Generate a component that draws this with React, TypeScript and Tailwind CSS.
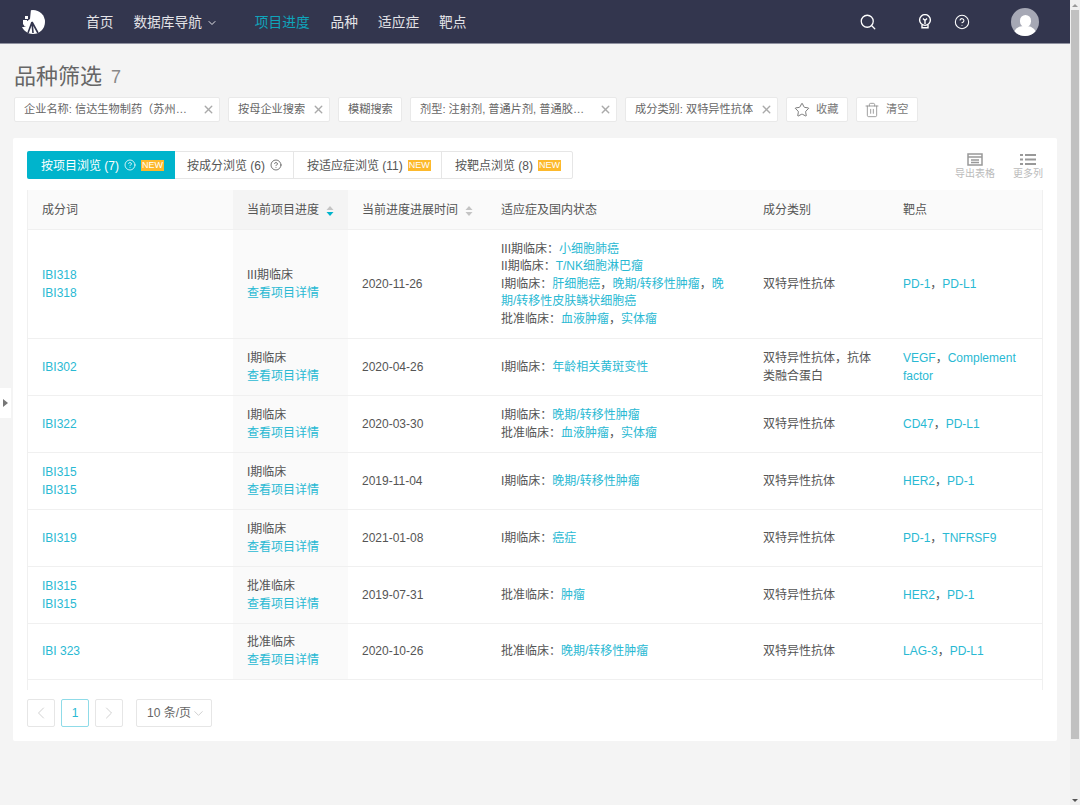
import { ChevronDown, ChevronLeft, ChevronRight, CircleHelp, Search, Star, Trash2, X } from 'lucide-react'

const chips = [
  { text: '企业名称: 信达生物制药（苏州…', w: 'w-[206px]' },
  { text: '按母企业搜索', w: 'w-[102px]' },
  { text: '模糊搜索', w: 'w-[64px]', plain: true },
  { text: '剂型: 注射剂, 普通片剂, 普通胶…', w: 'w-[207px]' },
  { text: '成分类别: 双特异性抗体', w: 'w-[153px]' },
]

const tabs = [
  { text: '按项目浏览 (7)', w: 'w-[148px]', help: true, isNew: true, active: true },
  { text: '按成分浏览 (6)', w: 'w-[119px]', help: true },
  { text: '按适应症浏览 (11)', w: 'w-[148px]', isNew: true },
  { text: '按靶点浏览 (8)', w: 'w-[131px]', isNew: true },
]

type Status = { label: string; links: string[] }

const rows: {
  names: string[]
  stage: string
  date: string
  status: Status[]
  kind: string
  targets: string[]
  h: string
}[] = [
  {
    names: ['IBI318', 'IBI318'],
    stage: 'III期临床',
    date: '2020-11-26',
    status: [
      { label: 'III期临床：', links: ['小细胞肺癌'] },
      { label: 'II期临床：', links: ['T/NK细胞淋巴瘤'] },
      { label: 'I期临床：', links: ['肝细胞癌', '晚期/转移性肿瘤', '晚期/转移性皮肤鳞状细胞癌'] },
      { label: '批准临床：', links: ['血液肿瘤', '实体瘤'] },
    ],
    kind: '双特异性抗体',
    targets: ['PD-1', 'PD-L1'],
    h: 'h-[109px]',
  },
  {
    names: ['IBI302'],
    stage: 'I期临床',
    date: '2020-04-26',
    status: [{ label: 'I期临床：', links: ['年龄相关黄斑变性'] }],
    kind: '双特异性抗体，抗体类融合蛋白',
    targets: ['VEGF', 'Complement factor'],
    h: 'h-[57px]',
  },
  {
    names: ['IBI322'],
    stage: 'I期临床',
    date: '2020-03-30',
    status: [
      { label: 'I期临床：', links: ['晚期/转移性肿瘤'] },
      { label: '批准临床：', links: ['血液肿瘤', '实体瘤'] },
    ],
    kind: '双特异性抗体',
    targets: ['CD47', 'PD-L1'],
    h: 'h-[57px]',
  },
  {
    names: ['IBI315', 'IBI315'],
    stage: 'I期临床',
    date: '2019-11-04',
    status: [{ label: 'I期临床：', links: ['晚期/转移性肿瘤'] }],
    kind: '双特异性抗体',
    targets: ['HER2', 'PD-1'],
    h: 'h-[57px]',
  },
  {
    names: ['IBI319'],
    stage: 'I期临床',
    date: '2021-01-08',
    status: [{ label: 'I期临床：', links: ['癌症'] }],
    kind: '双特异性抗体',
    targets: ['PD-1', 'TNFRSF9'],
    h: 'h-[57px]',
  },
  {
    names: ['IBI315', 'IBI315'],
    stage: '批准临床',
    date: '2019-07-31',
    status: [{ label: '批准临床：', links: ['肿瘤'] }],
    kind: '双特异性抗体',
    targets: ['HER2', 'PD-1'],
    h: 'h-[57px]',
  },
  {
    names: ['IBI 323'],
    stage: '批准临床',
    date: '2020-10-26',
    status: [{ label: '批准临床：', links: ['晚期/转移性肿瘤'] }],
    kind: '双特异性抗体',
    targets: ['LAG-3', 'PD-L1'],
    h: 'h-[56px]',
  },
]

function Logo() {
  return (
    <svg width="26" height="26" viewBox="0 0 26 26" className="shrink-0">
      <circle cx="13" cy="13" r="12" fill="#fff" />
      <path d="M0 0H11L10 10L6 13L6 18L0 18Z" fill="#33364e" />
      <rect x="5" y="7" width="3" height="3" fill="#fff" />
      <rect x="3" y="11" width="4" height="4" fill="#fff" />
      <path d="M3 15L10 12L11 15L5 18Z" fill="#fff" />
      <path d="M12 13L8 24M12 13L13 24M12 13L18 24" stroke="#33364e" strokeWidth="1.6" fill="none" />
    </svg>
  )
}

function BulbIcon() {
  return (
    <svg width="14" height="15" viewBox="0 0 14 15" fill="none" stroke="#fff" strokeWidth="1.4">
      <circle cx="7" cy="6" r="5.4" />
      <path d="M7 10V6.5L5 4.6M7 6.5L9 4.6" />
      <path d="M4 11V13.8H10V11" />
    </svg>
  )
}

function SortCaret({ active }: { active?: boolean }) {
  return (
    <svg width="8" height="12" viewBox="0 0 8 12" className="ml-[7px] shrink-0">
      <path d="M4 1L7.5 5H0.5Z" fill="#c4c4c4" />
      <path d="M4 11L7.5 7H0.5Z" fill={active ? '#00b4cc' : '#c4c4c4'} />
    </svg>
  )
}

function NewBadge() {
  return (
    <span className="ml-[5px] flex h-[11px] w-[23px] items-center justify-center bg-[#fdb92c] text-[9px] leading-none text-white">
      NEW
    </span>
  )
}

function Chip({ text, w, plain }: { text: string; w: string; plain?: boolean }) {
  return (
    <div className={`flex h-[25px] shrink-0 items-center justify-between rounded-[2px] border border-[#e9e9e9] bg-white pl-[9px] pr-[4px] ${w}`}>
      <span className="truncate pt-[1px] text-[11.2px] text-[#666]">{text}</span>
      {!plain && <X size={13} strokeWidth={2.6} className="shrink-0 text-[#aaa]" />}
    </div>
  )
}

function LinkList({ items }: { items: string[] }) {
  return (
    <>
      {items.map((item, i) => (
        <span key={item}>
          {i > 0 && <span className="text-[#555]">，</span>}
          <span className="text-[#29b9d3]">{item}</span>
        </span>
      ))}
    </>
  )
}

export default function App() {
  return (
    <div className="flex h-[805px] w-[1080px] overflow-hidden bg-[#f4f4f4] font-['Liberation_Sans','Noto_Sans_CJK_SC',sans-serif] text-[12px] leading-[17.6px] text-[#555]">
      <div className="relative w-[1070px] shrink-0">
        {/* top nav */}
        <header className="flex h-[44px] items-center border-b border-[#8f91a0] bg-[#33364e] text-[#e4e4e8]">
          <div className="ml-[20px] flex w-[66px] items-center">
            <Logo />
          </div>
          <nav className="flex items-center pt-[2px] text-[13.7px]">
            <a>首页</a>
            <a className="ml-[20px]">数据库导航</a>
            <ChevronDown size={12} strokeWidth={2} className="ml-[4px]" />
            <a className="ml-[37px] text-[#0fa5bb]">项目进度</a>
            <a className="ml-[21px]">品种</a>
            <a className="ml-[20px]">适应症</a>
            <a className="ml-[20px]">靶点</a>
          </nav>
          <div className="ml-auto flex items-center text-white">
            <Search size={18} strokeWidth={1.7} />
            <div className="ml-[41px]">
              <BulbIcon />
            </div>
            <CircleHelp size={16} strokeWidth={1.6} className="ml-[22px]" />
            <div className="relative ml-[41px] mr-[31px] h-[28px] w-[28px] overflow-hidden rounded-full bg-[#a6a8b5]">
              <div className="mx-auto mt-[7px] h-[12px] w-[11px] rounded-full bg-white" />
              <div className="mx-auto -mt-[1px] h-[12px] w-[24px] rounded-t-[10px] bg-white" />
            </div>
          </div>
        </header>

        <div className="flex items-center pl-[14px] pt-[18px]">
          <span className="text-[22px] leading-[30px] text-[#666]">品种筛选</span>
          <span className="ml-[9px] text-[18px] leading-[30px] text-[#888]">7</span>
        </div>

        {/* active filters */}
        <div className="mt-[5px] flex gap-[8px] pl-[14px]">
          {chips.map(c => (
            <Chip key={c.text} {...c} />
          ))}
          <div className="flex h-[25px] w-[62px] items-center gap-[6px] rounded-[2px] border border-[#e9e9e9] bg-white pl-[7px] text-[11.2px] text-[#777]">
            <Star size={16} strokeWidth={1.3} className="text-[#666]" />
            <span className="pt-[1px]">收藏</span>
          </div>
          <div className="flex h-[25px] w-[62px] items-center gap-[6px] rounded-[2px] border border-[#e9e9e9] bg-white pl-[7px] text-[11.2px] text-[#777]">
            <Trash2 size={16} strokeWidth={1.2} className="text-[#888]" />
            <span className="pt-[1px]">清空</span>
          </div>
        </div>

        {/* results card */}
        <section className="ml-[13px] mt-[16px] h-[603px] w-[1044px] rounded-[2px] bg-white px-[14px] pt-[13px]">
          <div className="flex h-[39px] items-start justify-between">
            <div className="flex h-[28px] rounded-[2px] border border-[#e6e6e6]">
              {tabs.map((t, i) => (
                <div
                  key={t.text}
                  className={`flex items-center ${t.w} ${t.active ? '-m-px h-[28px] rounded-l-[2px] bg-[#00b4cc] pl-[14px] text-white' : 'pl-[13px] text-[#555]'} ${i > 1 ? 'border-l border-[#e6e6e6]' : ''}`}
                >
                  <span className="pt-[3px]">{t.text}</span>
                  {t.help && <CircleHelp size={12} strokeWidth={1.6} className="ml-[5px]" />}
                  {t.isNew && <NewBadge />}
                </div>
              ))}
            </div>
            <div className="mt-[2px] flex gap-[18px] text-[10px] leading-[12px] text-[#bbb]">
              <div className="flex flex-col items-center">
                <svg width="16" height="13" viewBox="0 0 16 13" fill="none" stroke="#999" strokeWidth="1.5">
                  <rect x="1" y="1" width="14" height="11" />
                  <path d="M1 4H15M4 7H12M4 9.5H12" />
                </svg>
                <span className="mt-[2px]">导出表格</span>
              </div>
              <div className="flex flex-col items-center">
                <svg width="16" height="13" viewBox="0 0 16 13" fill="none" stroke="#999" strokeWidth="2">
                  <path d="M0 2H3M5 2H16M0 6.5H3M5 6.5H16M0 11H3M5 11H16" />
                </svg>
                <span className="mt-[2px]">更多列</span>
              </div>
            </div>
          </div>

          <div className="h-[500px] border-x border-[#f0f0f0]">
            <table className="w-full table-fixed border-collapse text-left">
              <colgroup>
                <col className="w-[205px]" />
                <col className="w-[115px]" />
                <col className="w-[140px]" />
                <col className="w-[262px]" />
                <col className="w-[140px]" />
                <col />
              </colgroup>
              <thead>
                <tr className="h-[39px] border-b border-[#f0f0f0] bg-[#fafafa] font-normal">
                  <th className="pl-[14px] pt-[3px] font-normal">成分词</th>
                  <th className="bg-[#f4f4f4] pl-[14px] pt-[3px] font-normal">
                    <span className="flex items-center">当前项目进度<SortCaret active /></span>
                  </th>
                  <th className="pl-[14px] pt-[3px] font-normal">
                    <span className="flex items-center">当前进度进展时间<SortCaret /></span>
                  </th>
                  <th className="pl-[13px] pt-[3px] font-normal">适应症及国内状态</th>
                  <th className="pl-[13px] pt-[3px] font-normal">成分类别</th>
                  <th className="pl-[13px] pt-[3px] font-normal">靶点</th>
                </tr>
              </thead>
              <tbody>
                {rows.map((r, i) => (
                  <tr key={i} className={`border-b border-[#f0f0f0] ${r.h}`}>
                    <td className="pl-[14px] pt-[2px] text-[#29b9d3]">
                      {r.names.map((n, j) => (
                        <div key={j}>{n}</div>
                      ))}
                    </td>
                    <td className="bg-[#fafafa] pl-[14px] pt-[2px]">
                      <div>{r.stage}</div>
                      <div className="text-[#29b9d3]">查看项目详情</div>
                    </td>
                    <td className="pl-[14px] pt-[2px]">{r.date}</td>
                    <td className="pl-[13px] pr-[24px] pt-[2px]">
                      {r.status.map(s => (
                        <div key={s.label}>
                          {s.label}
                          <LinkList items={s.links} />
                        </div>
                      ))}
                    </td>
                    <td className="pl-[13px] pr-[14px] pt-[2px]">{r.kind}</td>
                    <td className="pl-[13px] pr-[10px] pt-[2px]">
                      <LinkList items={r.targets} />
                    </td>
                  </tr>
                ))}
              </tbody>
            </table>
          </div>

          {/* pagination */}
          <div className="mt-[9px] flex items-center">
            <div className="flex h-[28px] w-[28px] items-center justify-center rounded-[2px] border border-[#e6e6e6] text-[#ccc]">
              <ChevronLeft size={20} strokeWidth={1.1} />
            </div>
            <div className="ml-[6px] flex h-[28px] w-[28px] items-center justify-center rounded-[2px] border border-[#8fdbe8] pt-[2px] text-[#29b9d3]">
              1
            </div>
            <div className="ml-[6px] flex h-[28px] w-[28px] items-center justify-center rounded-[2px] border border-[#e6e6e6] text-[#ccc]">
              <ChevronRight size={20} strokeWidth={1.1} />
            </div>
            <div className="ml-[13px] flex h-[28px] w-[76px] items-center rounded-[2px] border border-[#e6e6e6] pl-[10px] text-[#666]">
              <span className="pt-[2px]">10 条/页</span>
              <ChevronDown size={15} strokeWidth={1.1} className="text-[#bbb]" />
            </div>
          </div>
        </section>

        {/* side panel handle */}
        <div className="absolute left-0 top-[388px] flex h-[30px] w-[11px] items-center justify-center bg-white">
          <span className="h-0 w-0 border-y-[4px] border-l-[5px] border-y-transparent border-l-[#777]" />
        </div>
      </div>

      {/* scrollbar */}
      <div className="flex w-[10px] shrink-0 flex-col bg-[#f0f0f0]">
        <div className="flex h-[10px] items-center justify-center">
          <span className="h-0 w-0 border-x-[3px] border-b-[3px] border-x-transparent border-b-[#999]" />
        </div>
        <div className="ml-[1px] h-[729px] w-[8px] bg-[#c1c1c1]" />
        <div className="mt-auto flex h-[10px] items-center justify-center">
          <span className="h-0 w-0 border-x-[3px] border-t-[3px] border-x-transparent border-t-[#555]" />
        </div>
      </div>
    </div>
  )
}
